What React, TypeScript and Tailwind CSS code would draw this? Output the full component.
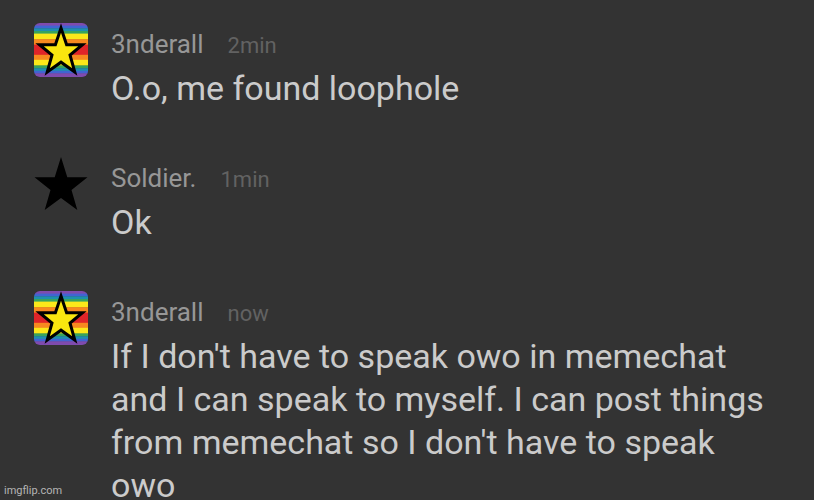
interface Message {
  id: number;
  user: string;
  time: string;
  text: string;
  avatar: "rainbow" | "black";
}

const messages: Message[] = [
  { id: 1, user: "3nderall", time: "2min", text: "O.o, me found loophole", avatar: "rainbow" },
  { id: 2, user: "Soldier.", time: "1min", text: "Ok", avatar: "black" },
  {
    id: 3,
    user: "3nderall",
    time: "now",
    text: "If I don't have to speak owo in memechat and I can speak to myself. I can post things from memechat so I don't have to speak owo",
    avatar: "rainbow",
  },
];

// [y, height, color], top to bottom
const stripes: [number, number, string][] = [
  [0, 3, "#7f4bae"],
  [2.6, 3, "#4164d2"],
  [5.3, 3, "#1f8fae"],
  [8, 3, "#37a35e"],
  [10.6, 6, "#fbe81a"],
  [16.2, 6, "#f7891f"],
  [21.6, 11, "#df2429"],
  [31.8, 6, "#f7891f"],
  [36.8, 6, "#fbe81a"],
  [42.4, 3, "#37a35e"],
  [45.2, 3, "#1f8fae"],
  [47.8, 3, "#4164d2"],
  [50.3, 4, "#7f4bae"],
];

function RainbowStar() {
  return (
    <svg viewBox="0 0 54 54" className="block size-full">
      {stripes.map(([y, height, fill]) => (
        <rect key={y} y={y} width="54" height={height} fill={fill} />
      ))}
      <path
        d="M27 5L32.6 21.7H48.5L36 32L40.8 49L27 39.2L13.2 49L18 32L5.5 21.7H21.4Z"
        fill="#fae60f"
        stroke="#000"
        strokeWidth="3"
        strokeMiterlimit="10"
      />
    </svg>
  );
}

function BlackStar() {
  return (
    <svg viewBox="0 0 54 54" className="block size-full">
      <path d="M27 0L33.3 20.3H53.5L37.5 33L43.3 53L27 41L10.7 53L16.5 33L0.5 20.3H20.7Z" fill="#000" />
    </svg>
  );
}

function ChatMessage({ message }: { message: Message }) {
  return (
    <li className="flex gap-[23px]">
      <div className="size-[54px] shrink-0 overflow-hidden rounded-md">
        {message.avatar === "rainbow" ? <RainbowStar /> : <BlackStar />}
      </div>
      <div className="min-w-0 flex-1">
        <div className="flex items-baseline gap-6 leading-[42px]">
          <span className="text-[26px] text-[#979797]">{message.user}</span>
          <span className="text-[22px] text-[#626262]">{message.time}</span>
        </div>
        <p className="text-[34px] leading-[43px] text-[#cbcbcb]">{message.text}</p>
      </div>
    </li>
  );
}

export default function App() {
  return (
    <main className="relative h-screen overflow-hidden bg-[#333333] font-['Roboto',sans-serif]">
      <ul className="flex flex-col gap-[47px] pt-[23px] pr-10 pl-[34px]">
        {messages.map((message) => (
          <ChatMessage key={message.id} message={message} />
        ))}
      </ul>
      <span className="absolute bottom-0 left-1 text-[11px] leading-[18px] text-[#b5b5b5]">imgflip.com</span>
    </main>
  );
}
